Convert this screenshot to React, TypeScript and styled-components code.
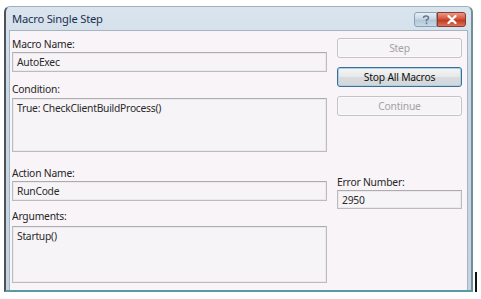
import React from "react";
import styled, { createGlobalStyle } from "styled-components";

const Global = createGlobalStyle`
  html, body { margin: 0; padding: 0; background: #ffffff; }
  body { width: 481px; height: 299px; overflow: hidden; font-family: "Noto Sans", "Open Sans", sans-serif; }
`;

const Page = styled.div`
  display: flex;
  align-items: flex-start;
  padding: 6px 0 0 4px;
  height: 299px;
  box-sizing: border-box;
`;

const Frame = styled.div`
  width: 469px;
  height: 286px;
  box-sizing: border-box;
  display: flex;
  flex-direction: column;
  border-left: 2px solid #4d5358;
  border-right: 2px solid #6f8f99;
  border-bottom: 2px solid #5a9aa3;
  border-top: 1px solid #9fb0bd;
  border-radius: 6px 6px 0 0;
  background: linear-gradient(180deg, #d9e4ee 0%, #cad8e5 30%, #c3d3e1 100%);
`;

const TitleBar = styled.div`
  height: 23px;
  display: flex;
  align-items: center;
  padding: 0 5px 0 6px;
`;

const Title = styled.div`
  flex: 1;
  font-size: 11.2px;
  color: #1e3050;
  letter-spacing: -0.2px;
`;

const CaptionButton = styled.div<{ $close?: boolean }>`
  height: 15px;
  width: ${(p) => (p.$close ? 29 : 23)}px;
  box-sizing: border-box;
  display: flex;
  align-items: center;
  justify-content: center;
  border: 1px solid ${(p) => (p.$close ? "#8a3a2e" : "#8aa0b4")};
  border-radius: ${(p) => (p.$close ? "0 3px 3px 0" : "3px 0 0 3px")};
  background: ${(p) =>
    p.$close
      ? "linear-gradient(180deg, #e79a86 0%, #d5573f 45%, #c2391f 55%, #d9735a 100%)"
      : "linear-gradient(180deg, #e8eff5 0%, #c9d7e4 45%, #b3c6d7 55%, #c9d9e6 100%)"};
`;

const Captions = styled.div`
  display: flex;
  margin-top: 2px;
`;

const Content = styled.div`
  flex: 1;
  margin: 0 3px 0 3px;
  background: #f8f4f8;
  border: 1px solid #a7b4bf;
  border-bottom: none;
  display: grid;
  grid-template-columns: 315px 125px;
  column-gap: 10px;
  padding: 6px 0 0 2px;
`;

const Column = styled.div`
  display: flex;
  flex-direction: column;
`;

const Label = styled.div<{ $top?: number }>`
  height: 14px;
  line-height: 14px;
  font-size: 10.3px;
  color: #262626;
  margin-top: ${(p) => p.$top ?? 0}px;
  letter-spacing: -0.2px;
`;

const Field = styled.div<{ $h: number; $top?: number }>`
  height: ${(p) => p.$h}px;
  margin-top: ${(p) => p.$top ?? 1}px;
  box-sizing: border-box;
  border: 1px solid #bcbcbc;
  border-top-color: #acacac;
  background: #f7f4f7;
  font-size: 10.3px;
  color: #2a2a2a;
  padding: 1px 4px;
  line-height: 16px;
  letter-spacing: -0.25px;
  box-shadow: inset 0 0 0 1px #ece9ec;
`;

const Button = styled.div<{ $disabled?: boolean; $default?: boolean; $top?: number }>`
  height: 20px;
  margin-top: ${(p) => p.$top ?? 0}px;
  box-sizing: border-box;
  display: flex;
  align-items: center;
  justify-content: center;
  border-radius: 3px;
  font-size: 10.3px;
  letter-spacing: -0.2px;
  color: ${(p) => (p.$disabled ? "#a3a3a3" : "#111111")};
  border: 1px solid ${(p) => (p.$default ? "#3d6f94" : "#c4c4c4")};
  background: ${(p) =>
    p.$default
      ? "linear-gradient(180deg, #f6f6f6 0%, #e8e8e8 48%, #d9dcdf 52%, #d2d6d9 100%)"
      : "#f6f4f6"};
  box-shadow: ${(p) => (p.$default ? "inset 0 0 0 1px #a9d2ea" : "inset 0 0 0 1px #fbfafb")};
`;

const SideMark = styled.div`
  width: 2px;
  height: 20px;
  background: #111;
  margin-left: 2px;
  margin-top: 266px;
`;

export default function App() {
  return (
    <>
      <Global />
      <Page>
        <Frame>
          <TitleBar>
            <Title>Macro Single Step</Title>
            <Captions>
              <CaptionButton>
                <svg width="8" height="10" viewBox="0 0 8 10">
                  <path d="M1.5 3 Q1.5 1 4 1 Q6.5 1 6.5 3 Q6.5 4.3 4.5 5 L4.5 6.5" fill="none" stroke="#5d7891" strokeWidth="1.5" />
                  <rect x="3.7" y="7.6" width="1.6" height="1.6" fill="#5d7891" />
                </svg>
              </CaptionButton>
              <CaptionButton $close>
                <svg width="10" height="9" viewBox="0 0 10 9">
                  <path d="M1.5 1 L8.5 8 M8.5 1 L1.5 8" stroke="#ffffff" strokeWidth="2.2" strokeLinecap="round" />
                </svg>
              </CaptionButton>
            </Captions>
          </TitleBar>
          <Content>
            <Column>
              <Label>Macro Name:</Label>
              <Field $h={20}>AutoExec</Field>
              <Label $top={10}>Condition:</Label>
              <Field $h={54} $top={2}>True: CheckClientBuildProcess()</Field>
              <Label $top={14}>Action Name:</Label>
              <Field $h={20}>RunCode</Field>
              <Label $top={8}>Arguments:</Label>
              <Field $h={57} $top={3}>Startup()</Field>
            </Column>
            <Column>
              <Button $disabled $top={1}>Step</Button>
              <Button $default $top={9}>Stop All Macros</Button>
              <Button $disabled $top={9}>Continue</Button>
              <Label $top={59}>Error Number:</Label>
              <Field $h={19}>2950</Field>
            </Column>
          </Content>
        </Frame>
        <SideMark />
      </Page>
    </>
  );
}
